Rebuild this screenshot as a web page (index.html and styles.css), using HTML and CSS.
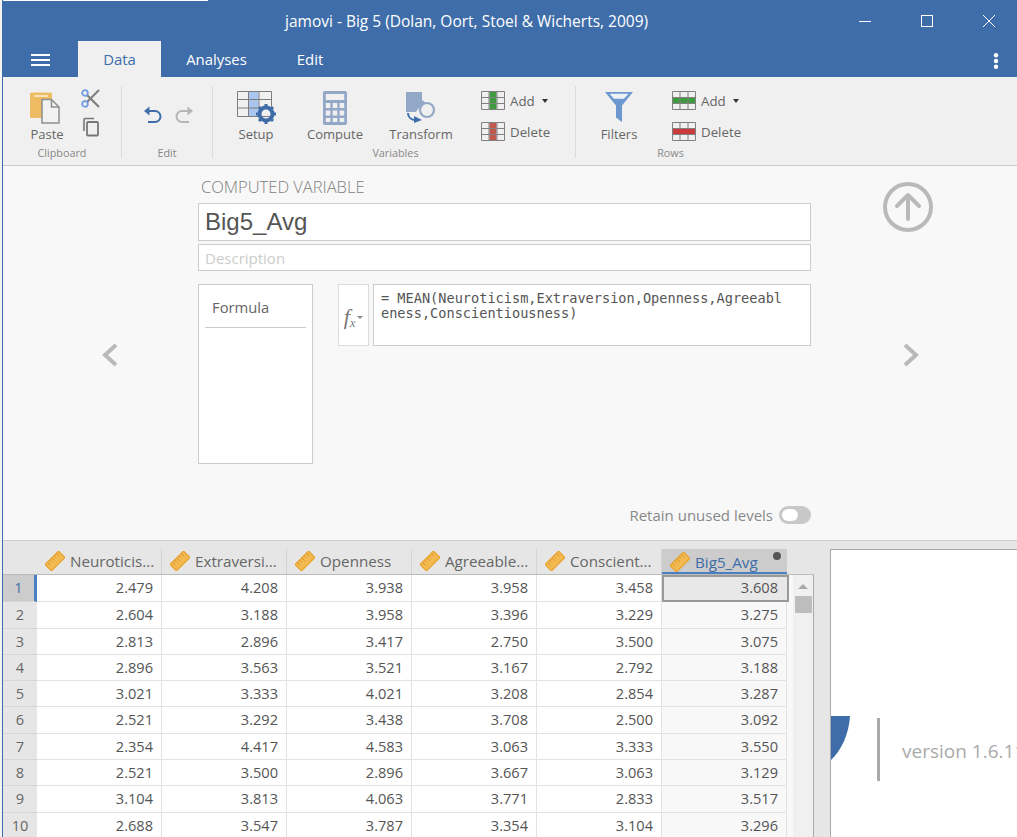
FILE: index.html
```html
<!DOCTYPE html>
<html lang="en">
<head>
<meta charset="utf-8">
<title>jamovi - Big 5</title>
<link rel="stylesheet" href="styles.css">
</head>
<body>
<svg class="defs" width="0" height="0" aria-hidden="true">
  <defs>
    <symbol id="ruler" viewBox="0 0 22 22">
      <g transform="rotate(-45 11 11)">
        <rect x="0.5" y="6" width="21" height="10" fill="#f2b950" stroke="#e8a026" stroke-width="1.2"/>
        <path d="M4 6.5v4M7.5 6.5v2.5M11 6.5v4M14.5 6.5v2.5M18 6.5v4" stroke="#d8922a" stroke-width="1" fill="none"/>
      </g>
    </symbol>
  </defs>
</svg>
<div class="app">
  <div class="topedge"><span class="topedge-white"></span></div>
  <header class="titlebar">
    <div class="title">jamovi - Big 5 (Dolan, Oort, Stoel &amp; Wicherts, 2009)</div>
    <div class="winctl">
      <svg width="14" height="14" viewBox="0 0 14 14"><path d="M1 7.5h12" stroke="#fff" stroke-width="1"/></svg>
      <svg width="14" height="14" viewBox="0 0 14 14"><rect x="1.5" y="1.5" width="11" height="11" fill="none" stroke="#fff"/></svg>
      <svg width="14" height="14" viewBox="0 0 14 14"><path d="M1 1l12 12M13 1L1 13" stroke="#fff" stroke-width="1"/></svg>
    </div>
  </header>
  <nav class="tabs">
    <svg class="burger" width="19" height="12" viewBox="0 0 19 12"><path d="M0 1h19M0 6h19M0 11h19" stroke="#fff" stroke-width="2"/></svg>
    <div class="tab active">Data</div>
    <div class="tab">Analyses</div>
    <div class="tab tab-edit">Edit</div>
    <svg class="kebab" width="6" height="16" viewBox="0 0 6 16"><circle cx="3" cy="2.2" r="2.2" fill="#fff"/><circle cx="3" cy="8" r="2.2" fill="#fff"/><circle cx="3" cy="13.8" r="2.2" fill="#fff"/></svg>
  </nav>

  <section class="ribbon">
    <div class="group g-clip">
      <div class="group-items">
        <div class="bigbtn b-paste">
          <svg width="34" height="34" viewBox="0 0 34 34">
            <path d="M1 3a1.5 1.5 0 0 1 1.500-1.500h19a1.500 1.500 0 0 1 1.500 1.500v24h-20.500a1.500 1.500 0 0 1-1.500-1.500z" fill="#ecbb62"/>
            <rect x="5" y="4" width="14" height="2" fill="#f7e3b8"/>
            <path d="M13 8.500h9.500l7.500 7.500v16h-17z" fill="#f2f2f2" stroke="#8f8f8f" stroke-width="1.500"/>
            <path d="M22.500 8.500v7.500h7.500" fill="none" stroke="#8f8f8f" stroke-width="1.500"/>
          </svg>
          <span>Paste</span>
        </div>
        <div class="smallcol">
          <svg width="19" height="19" viewBox="0 0 19 19">
            <path d="M6 6L18 18M6 13L18 1" stroke="#808080" stroke-width="2.200"/>
            <circle cx="4" cy="4" r="2.800" fill="#f0f0f0" stroke="#6f9be0" stroke-width="1.800"/>
            <circle cx="4" cy="15" r="2.800" fill="#f0f0f0" stroke="#6f9be0" stroke-width="1.800"/>
          </svg>
          <svg width="19" height="20" viewBox="0 0 19 20">
            <path d="M3 14V2.500a1 1 0 0 1 1-1h9" fill="none" stroke="#777" stroke-width="1.600"/>
            <rect x="6" y="5" width="11" height="13.500" rx="1" fill="none" stroke="#777" stroke-width="1.800"/>
          </svg>
        </div>
      </div>
      <div class="group-label">Clipboard</div>
    </div>

    <div class="group g-edit">
      <div class="group-items">
        <svg class="undo" width="20" height="20" viewBox="0 0 20 20"><path d="M2 5h10a5.500 5.500 0 0 1 0 11H5" fill="none" stroke="#3e6da9" stroke-width="2"/><path d="M6.500 0.500v9L1 5z" fill="#3e6da9"/></svg>
        <svg class="redo" width="20" height="20" viewBox="0 0 20 20"><path d="M18 5H8a5.500 5.500 0 0 0 0 11h7" fill="none" stroke="#b5b5b5" stroke-width="2"/><path d="M13.500 0.500v9L19 5z" fill="#b5b5b5"/></svg>
      </div>
      <div class="group-label">Edit</div>
    </div>

    <div class="group g-vars">
      <div class="group-items">
        <div class="bigbtn b-setup">
          <svg width="40" height="34" viewBox="0 0 40 34">
            <rect x="12.500" y="1" width="10" height="25" fill="#a9c6ee"/>
            <path d="M1.500 0.500h34v25h-34zM1.500 8.500h34M1.500 17h34M12.500 0.500v25M23 0.500v25" fill="none" stroke="#7d7d7d" stroke-width="1"/>
            <circle cx="30" cy="23" r="6.500" fill="none" stroke="#3e6da9" stroke-width="4"/>
            <path d="M30 13v4M30 29v4M20 23h4M36 23h4M23 16l3 3M37 16l-3 3M23 30l3-3M37 30l-3-3" stroke="#3e6da9" stroke-width="3"/>
          </svg>
          <span>Setup</span>
        </div>
        <div class="bigbtn b-compute">
          <svg width="24" height="34" viewBox="0 0 26 34" preserveAspectRatio="none">
            <path d="M0 2a2 2 0 0 1 2-2h22a2 2 0 0 1 2 2v30a2 2 0 0 1-2 2H2a2 2 0 0 1-2-2z" fill="#93a7c6"/>
            <rect x="3" y="3" width="20" height="6" fill="#f0f0f0"/>
            <path d="M3 12h5v5H3zM10.500 12h5v5h-5zM18 12h5v5h-5zM3 19.500h5v5H3zM10.500 19.500h5v5h-5zM18 19.500h5v5h-5zM3 27h5v4H3zM10.500 27h5v4h-5zM18 27h5v4h-5z" fill="#f0f0f0"/>
          </svg>
          <span>Compute</span>
        </div>
        <div class="bigbtn b-transform">
          <svg width="32" height="34" viewBox="0 0 32 34">
            <path d="M1 1h16v8l3 2-7 7-2 3H1z" fill="#93a7c6"/>
            <circle cx="22" cy="19" r="7" fill="#f0f0f0" stroke="#93a7c6" stroke-width="2.200"/>
            <path d="M3 22c0 4 3 7 8 7" fill="none" stroke="#3e6da9" stroke-width="2"/>
            <path d="M9 25l8 4-8 3z" fill="#3e6da9"/>
          </svg>
          <span>Transform</span>
        </div>
        <div class="sidecol sc-vars">
          <div class="sidebtn">
            <svg width="24" height="19" viewBox="0 0 24 19"><rect x="8.500" y="1" width="7" height="17" fill="#3e9b3e"/><path d="M0.500 0.500h23v18h-23zM0.500 6.500h23M0.500 12.500h23M8 0.500v18M16 0.500v18" fill="none" stroke="#808080"/></svg>
            <span>Add</span><i class="caret"></i>
          </div>
          <div class="sidebtn">
            <svg width="24" height="19" viewBox="0 0 24 19"><rect x="8.500" y="1" width="7" height="17" fill="#c0584e"/><path d="M0.500 0.500h23v18h-23zM0.500 6.500h23M0.500 12.500h23M8 0.500v18M16 0.500v18" fill="none" stroke="#808080"/></svg>
            <span>Delete</span>
          </div>
        </div>
      </div>
      <div class="group-label">Variables</div>
    </div>

    <div class="group g-rows">
      <div class="group-items">
        <div class="bigbtn b-filters">
          <svg width="30" height="31" viewBox="0 0 30 34" preserveAspectRatio="none">
            <path d="M1 1h28L18 16v18l-6-5V16z" fill="#6d97cf"/>
            <path d="M5.500 3h19l-4.500 5.500H10z" fill="#eef2f7"/>
          </svg>
          <span>Filters</span>
        </div>
        <div class="sidecol sc-rows">
          <div class="sidebtn">
            <svg width="24" height="19" viewBox="0 0 24 19"><rect x="1" y="6.500" width="22" height="6" fill="#3e9b3e"/><path d="M0.500 0.500h23v18h-23zM8 0.500v18M16 0.500v18M0.500 6.500h23M0.500 12.500h23" fill="none" stroke="#808080"/></svg>
            <span>Add</span><i class="caret"></i>
          </div>
          <div class="sidebtn">
            <svg width="24" height="19" viewBox="0 0 24 19"><path d="M0.500 0.500h23v18h-23zM8 0.500v18M16 0.500v18M0.500 6.500h23M0.500 12.500h23" fill="none" stroke="#808080"/><rect x="1" y="7" width="22" height="5" fill="#cc3b3b"/></svg>
            <span>Delete</span>
          </div>
        </div>
      </div>
      <div class="group-label">Rows</div>
    </div>
  </section>

  <section class="editor">
    <div class="nav nav-left">
      <svg width="18" height="24" viewBox="0 0 18 24"><path d="M15 2L4 12l11 10" fill="none" stroke="#b9b9b9" stroke-width="4"/></svg>
    </div>
    <div class="editor-main">
      <div class="ed-title">COMPUTED VARIABLE</div>
      <div class="ed-name">Big5_Avg</div>
      <div class="ed-desc">Description</div>
      <div class="ed-formula-row">
        <div class="levels"><div class="levels-item">Formula</div></div>
        <div class="fx"><span class="fx-text">f<sub>x</sub></span><i class="caret caret-small"></i></div>
        <div class="formula">= MEAN(Neuroticism,Extraversion,Openness,Agreeableness,Conscientiousness)</div>
      </div>
      <div class="retain">
        <span>Retain unused levels</span>
        <span class="toggle"><i></i></span>
      </div>
    </div>
    <div class="nav nav-right">
      <svg class="uparrow" width="50" height="50" viewBox="0 0 50 50"><circle cx="25" cy="25" r="23" fill="none" stroke="#b9b9b9" stroke-width="4"/><path d="M25 37V13M14 24l11-11 11 11" fill="none" stroke="#b9b9b9" stroke-width="4" stroke-linecap="round" stroke-linejoin="round"/></svg>
      <svg width="18" height="24" viewBox="0 0 18 24"><path d="M3 2l11 10L3 22" fill="none" stroke="#b9b9b9" stroke-width="4"/></svg>
    </div>
  </section>

  <section class="lower">
    <div class="datagrid">
      <div class="thead">
        <div class="corner"></div>
        <div class="th"><svg class="rl"><use href="#ruler"/></svg><span>Neuroticis...</span></div>
        <div class="th"><svg class="rl"><use href="#ruler"/></svg><span>Extraversi...</span></div>
        <div class="th"><svg class="rl"><use href="#ruler"/></svg><span>Openness</span></div>
        <div class="th"><svg class="rl"><use href="#ruler"/></svg><span>Agreeable...</span></div>
        <div class="th"><svg class="rl"><use href="#ruler"/></svg><span>Conscient...</span></div>
        <div class="th th-sel"><svg class="rl"><use href="#ruler"/></svg><span>Big5_Avg</span><i class="dot"></i></div>
      </div>
      <div class="tbody-wrap">
        <div class="tbody">
          <div class="tr tall sel"><div class="rn">1</div><div class="td">2.479</div><div class="td">4.208</div><div class="td">3.938</div><div class="td">3.958</div><div class="td">3.458</div><div class="td tc cur">3.608</div></div>
          <div class="tr tall"><div class="rn">2</div><div class="td">2.604</div><div class="td">3.188</div><div class="td">3.958</div><div class="td">3.396</div><div class="td">3.229</div><div class="td tc">3.275</div></div>
          <div class="tr"><div class="rn">3</div><div class="td">2.813</div><div class="td">2.896</div><div class="td">3.417</div><div class="td">2.750</div><div class="td">3.500</div><div class="td tc">3.075</div></div>
          <div class="tr"><div class="rn">4</div><div class="td">2.896</div><div class="td">3.563</div><div class="td">3.521</div><div class="td">3.167</div><div class="td">2.792</div><div class="td tc">3.188</div></div>
          <div class="tr"><div class="rn">5</div><div class="td">3.021</div><div class="td">3.333</div><div class="td">4.021</div><div class="td">3.208</div><div class="td">2.854</div><div class="td tc">3.287</div></div>
          <div class="tr tall"><div class="rn">6</div><div class="td">2.521</div><div class="td">3.292</div><div class="td">3.438</div><div class="td">3.708</div><div class="td">2.500</div><div class="td tc">3.092</div></div>
          <div class="tr"><div class="rn">7</div><div class="td">2.354</div><div class="td">4.417</div><div class="td">4.583</div><div class="td">3.063</div><div class="td">3.333</div><div class="td tc">3.550</div></div>
          <div class="tr"><div class="rn">8</div><div class="td">2.521</div><div class="td">3.500</div><div class="td">2.896</div><div class="td">3.667</div><div class="td">3.063</div><div class="td tc">3.129</div></div>
          <div class="tr tall"><div class="rn">9</div><div class="td">3.104</div><div class="td">3.813</div><div class="td">4.063</div><div class="td">3.771</div><div class="td">2.833</div><div class="td tc">3.517</div></div>
          <div class="tr"><div class="rn">10</div><div class="td">2.688</div><div class="td">3.547</div><div class="td">3.787</div><div class="td">3.354</div><div class="td">3.104</div><div class="td tc">3.296</div></div>
        </div>
        <div class="gutter"></div>
        <div class="scroll"><i class="scroll-up"></i><i class="scroll-thumb"></i></div>
      </div>
    </div>
    <aside class="results">
      <svg class="logo-arc" width="20" height="44" viewBox="0 0 20 44"><path d="M0 0h19C18 18 10 35 0 44z" fill="#3e6da9"/></svg>
      <div class="logo-bar"></div>
      <div class="version">version 1.6.11</div>
    </aside>
  </section>
</div>
</body>
</html>
```

FILE: styles.css
```css
* { box-sizing: border-box; }
html, body { margin: 0; padding: 0; height: 100%; overflow: hidden; }
body {
  background: #f3f3f3;
  font-family: "Open Sans", "Noto Sans", sans-serif;
  color: #666;
}
.defs { position: absolute; }
.app {
  margin-left: 2px;
  border-left: 1px solid #3e6da9;
  height: 837px;
  display: flex;
  flex-direction: column;
  overflow: hidden;
  background: #e6e6e6;
}
.topedge { height: 1px; background: #3e6da9; margin-left: -1px; }
.topedge-white { display: block; width: 206px; height: 1px; background: #fff; }

.titlebar {
  height: 40px;
  background: #3e6da9;
  color: #fff;
  display: flex;
  align-items: center;
  flex: none;
}
.title { margin-left: 282px; font-size: 15.5px; }
.winctl { margin-left: auto; display: flex; gap: 48px; padding-right: 21px; }

.tabs {
  height: 36px;
  background: #3e6da9;
  display: flex;
  align-items: stretch;
  flex: none;
  position: relative;
  color: #fff;
  font-size: 14.9px;
}
.burger { align-self: center; margin: 2px 28px 0 28px; }
.tab { display: flex; align-items: center; justify-content: center; padding-bottom: 1px; width: 95px; }
.tab.active { background: #f0f0f0; color: #3e6da9; width: 83px; margin-right: 8px; }
.tab-edit { margin-left: 14px; width: 64px; }
.kebab { margin-left: auto; align-self: center; margin-right: 18px; margin-top: 3px; }

.ribbon {
  height: 89px;
  flex: none;
  background: #f0f0f0;
  border-bottom: 1px solid #ccc;
  display: flex;
  padding-top: 9px;
  padding-bottom: 7px;
}
.group { display: flex; flex-direction: column; border-right: 1px solid #dcdcdc; }
.group-items { height: 59px; display: flex; flex: none; }
.group-label { font-size: 10.8px; color: #888; text-align: center; margin-top: 1px; line-height: 14px; }
.g-clip { width: 119px; padding-left: 18px; }
.g-clip .group-label { margin-left: -18px; }
.g-edit { width: 91px; }
.g-edit .group-items { gap: 11px; padding-top: 20px; padding-left: 21px; }
.g-vars { width: 363px; padding-left: 3px; }
.g-rows { border-right: 0; padding-left: 14px; width: 200px; }
.g-rows .group-label { width: 161px; }
.bigbtn {
  display: flex;
  flex-direction: column;
  align-items: center;
  font-size: 13px;
  color: #666;
  height: 59px;
  flex: none;
}
.bigbtn svg { margin-top: 5px; flex: none; }
.bigbtn span { margin-top: 1px; line-height: 17px; }
.b-filters span { margin-top: 4px; }
.b-paste { width: 52px; }
.b-paste svg { margin-left: -3px; }
.b-setup { width: 80px; }
.b-compute { width: 78px; }
.b-transform { width: 94px; }
.b-filters { width: 58px; }
.smallcol { display: flex; flex-direction: column; gap: 9px; margin-left: 8px; padding-top: 3px; }
.smallcol svg { display: block; }
.sidecol { display: flex; flex-direction: column; gap: 12px; padding-top: 5px; }
.sc-vars { margin-left: 13px; }
.sc-rows { margin-left: 24px; }
.sidebtn { display: flex; align-items: center; height: 19px; font-size: 13.3px; color: #666; }
.sidebtn span { margin-left: 5px; }
.caret {
  display: inline-block;
  width: 0; height: 0;
  border-left: 3.500px solid transparent;
  border-right: 3.500px solid transparent;
  border-top: 4px solid #333;
  margin-left: 7px;
}
.caret-small { border-top-color: #888; border-left-width: 3px; border-right-width: 3px; border-top-width: 3px; margin-left: 2px; }

.editor {
  height: 375px;
  flex: none;
  background: #f8f8f8;
  border-bottom: 1px solid #ccc;
  display: grid;
  grid-template-columns: 195px 613px 1fr;
}
.nav { display: flex; align-items: center; padding-top: 4px; position: relative; }
.nav-left { justify-content: flex-end; padding-right: 79px; }
.nav-right { padding-left: 91px; }
.uparrow { position: absolute; left: 72px; top: 16px; }
.editor-main { display: flex; flex-direction: column; padding-top: 11px; padding-bottom: 16px; }
.ed-title { font-size: 16.5px; font-weight: 300; color: #808080; padding-left: 3px; line-height: 20px; height: 26px; }
.ed-name {
  height: 38px;
  background: #fff;
  border: 1px solid #ccc;
  font-family: "Liberation Sans", Arial, sans-serif;
  font-size: 24px;
  color: #555;
  padding-left: 6px;
  line-height: 36px;
}
.ed-desc {
  height: 27px;
  margin-top: 3px;
  background: #fff;
  border: 1px solid #ccc;
  font-size: 15px;
  color: #ccc;
  padding-left: 6px;
  line-height: 26px;
}
.ed-formula-row { display: flex; align-items: flex-start; margin-top: 13px; }
.levels { width: 115px; height: 180px; background: #fff; border: 1px solid #ccc; padding: 0 6px; flex: none; }
.levels-item { height: 43px; border-bottom: 1px solid #ccc; font-size: 14.8px; color: #666; padding: 12px 0 0 7px; line-height: 20px; }
.fx {
  width: 31px; height: 62px; margin-left: 25px; background: #fff; border: 1px solid #ddd;
  display: flex; align-items: center; justify-content: center; flex: none; padding-top: 4px;
}
.fx-text { font-family: "Liberation Serif", serif; font-style: italic; font-size: 22px; color: #777; line-height: 20px; }
.fx-text sub { font-size: 12px; vertical-align: -3px; line-height: 0; }
.formula {
  width: 438px; height: 62px; margin-left: 4px; background: #fff; border: 1px solid #ccc;
  font-family: "DejaVu Sans Mono", monospace; font-size: 13.6px; line-height: 15px; color: #555;
  padding: 6px 20px 6px 7px; word-break: break-all; flex: none;
}
.retain { margin-top: auto; display: flex; justify-content: flex-end; align-items: center; gap: 6px; font-size: 15px; color: #888; height: 18px; }
.toggle { width: 32px; height: 18px; border-radius: 9px; background: #c8c8c8; display: block; padding: 3px; }
.toggle i { display: block; width: 16px; height: 12px; border-radius: 6px; background: #fff; }

.lower { flex: 1; display: flex; min-height: 0; padding-top: 8px; align-items: flex-start; }
.datagrid { width: 812px; flex: none; font-size: 14.6px; }
.thead { display: grid; grid-template-columns: 34px repeat(6, 125px); height: 26px; }
.corner { background: #e6e6e6; }
.th {
  background: #e6e6e6;
  border-right: 1px solid #d4d4d4;
  display: flex; align-items: center; padding-left: 8px; padding-bottom: 2px; gap: 5px;
  position: relative; color: #666; font-size: 15.2px; white-space: nowrap; overflow: hidden;
}
.rl { width: 20px; height: 20px; flex: none; }
.th-sel { background: #ccc; color: #3e6da9; border-bottom: 3px solid #4a7fc1; border-right: 0; padding-top: 2px; padding-bottom: 0; overflow: visible; }
.dot { position: absolute; right: 6px; top: 3px; width: 8px; height: 8px; border-radius: 50%; background: #555; }
.tbody-wrap { display: flex; height: 300px; border-top: 1px solid #bbb; margin-top: -1px; position: relative; width: 811px; }
.tbody { width: 784px; flex: none; }
.tr { display: grid; grid-template-columns: 34px repeat(6, 125px); grid-template-rows: minmax(0, 1fr); height: 26px; }
.tr.tall { height: 27px; }
.rn { background: #e6e6e6; border-bottom: 1px solid #d6d6d6; text-align: center; line-height: 24px; color: #666; }
.td { background: #fff; border-right: 1px solid #e2e2e2; border-bottom: 1px solid #e2e2e2; text-align: right; padding-right: 8px; line-height: 24px; color: #555; }
.tc { background: #f8f8f8; }
.sel .rn { background: #ccc; color: #3e6da9; border-right: 3px solid #4a7fc1; }
.td.cur { background: #e8e8e8; outline: 2px solid #999; outline-offset: -2px; margin-right: -2px; padding-right: 10px; position: relative; z-index: 1; }
.gutter { width: 6px; background: #f8f8f8; flex: none; }
.scroll { width: 21px; background: #f0f0f0; border-right: 1px solid #aaa; flex: none; position: relative; height: 100%; }
.scroll-up { position: absolute; left: 5px; top: 9px; width: 0; height: 0; border-left: 5px solid transparent; border-right: 5px solid transparent; border-bottom: 5px solid #aaa; }
.scroll-thumb { position: absolute; left: 2px; top: 21px; width: 17px; height: 17px; background: #bdbdbd; }
.results {
  margin-left: 15px;
  flex: 1;
  height: 300px;
  background: #fff;
  border-left: 1px solid #aaa;
  border-top: 1px solid #aaa;
  position: relative;
  overflow: hidden;
}
.logo-arc { position: absolute; left: 0; top: 166px; }
.logo-bar { position: absolute; left: 46px; top: 168px; width: 3px; height: 63px; background: #aaa; }
.version { position: absolute; left: 71px; top: 188px; font-size: 19px; color: #aaa; white-space: nowrap; }
```
